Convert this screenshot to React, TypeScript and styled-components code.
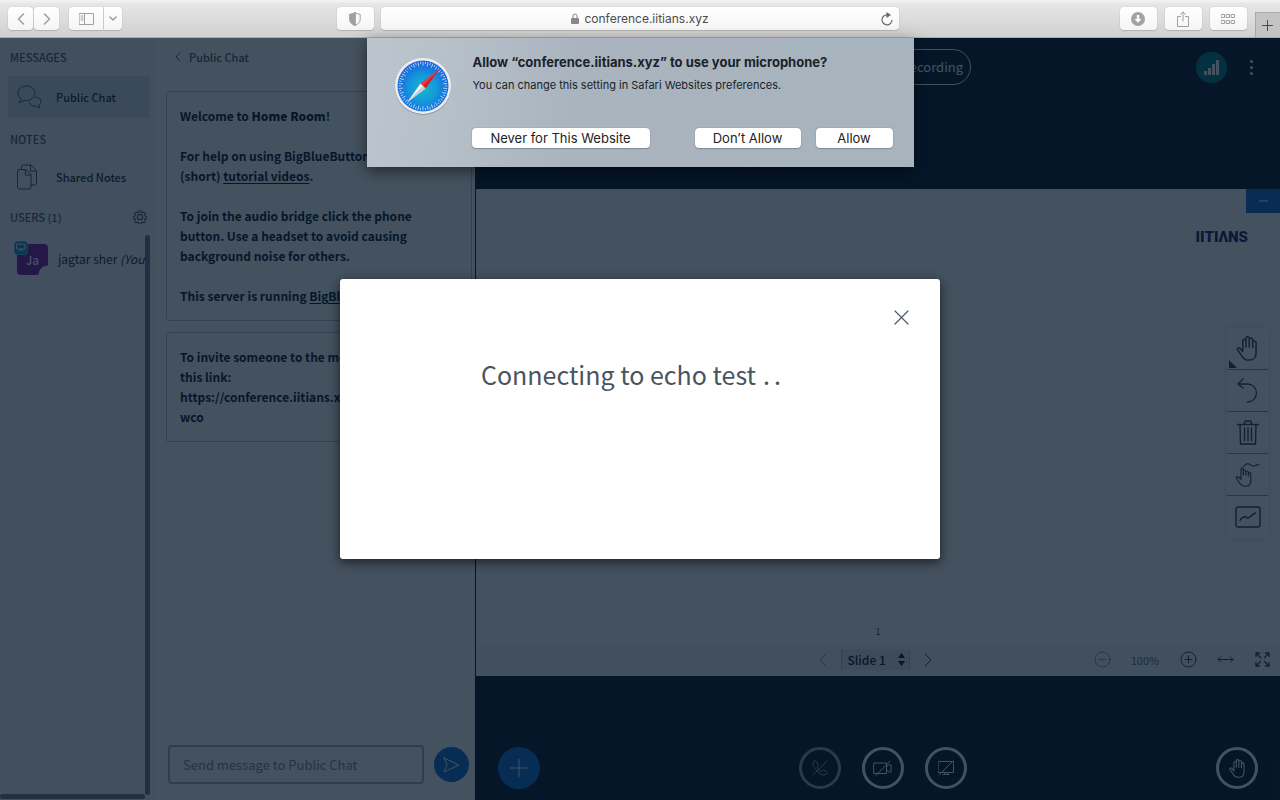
import React from "react";
import styled, { createGlobalStyle } from "styled-components";

const humanist = `"Noto Sans CJK SC", "Noto Sans", sans-serif`;
const system = `Inter, "Liberation Sans", sans-serif`;

const GlobalStyle = createGlobalStyle`
  *, *::before, *::after { box-sizing: border-box; }
  body { margin: 0; font-family: ${humanist}; color: #06172a; }
  button, input, select { font: inherit; color: inherit; margin: 0; padding: 0; border: 0; background: none; }
  button { display: flex; align-items: center; justify-content: center; cursor: pointer; }
  h1, h2, p { margin: 0; }
  a { color: inherit; text-underline-offset: 2px; }
  svg { display: block; flex: none; }
`;

const Window = styled.div`
  display: flex;
  flex-direction: column;
  min-height: 100vh;
  overflow: hidden;
`;

/* Browser toolbar */
const Toolbar = styled.header`
  display: grid;
  grid-template-columns: 22fr 30fr 22fr;
  height: 38px;
  flex: none;
  background: linear-gradient(#f4f4f4 0, #e6e6e6 4px, #d0d0d0 100%);
  border-bottom: 1px solid #a9adb0;
  font-family: ${system};
`;
const ToolbarSide = styled.div<{ $end?: boolean }>`
  display: flex;
  align-items: center;
  justify-content: ${(p) => (p.$end ? "flex-end" : "flex-start")};
  padding: ${(p) => (p.$end ? "0" : "0 7px 0 8px")};
  gap: ${(p) => (p.$end ? "8px" : "1px")};
`;
const ToolButton = styled.button<{ $w: number; $join?: "left" | "right" }>`
  width: ${(p) => p.$w}px;
  height: 23px;
  background: linear-gradient(#fff, #f5f5f5);
  border-radius: ${(p) => (p.$join === "left" ? "4px 0 0 4px" : p.$join === "right" ? "0 4px 4px 0" : "4px")};
  box-shadow: 0 0 1px #a0a0a0, 0 1px 1px #b4b4b4;
  color: #a0a0a0;
`;
const SplitPair = styled.div`
  display: flex;
  gap: 1px;
  margin-left: 9px;
`;
const Push = styled.div`
  margin-left: auto;
`;
const Address = styled.div`
  align-self: center;
  display: grid;
  grid-template-columns: 1fr auto 1fr;
  align-items: center;
  height: 23px;
  padding: 0 6px;
  background: linear-gradient(#fff, #f6f6f6);
  border-radius: 4px;
  box-shadow: 0 0 1px #a0a0a0, 0 1px 1px #b4b4b4;
  font-size: 12px;
  line-height: 16px;
  color: #4c4c4c;
`;
const AddressText = styled.span`
  grid-column: 2;
  display: flex;
  align-items: center;
  gap: 5px;
`;
const Reload = styled.button`
  justify-self: end;
  color: #6b6b6b;
`;
const NewTab = styled.button`
  align-self: flex-end;
  width: 25px;
  height: 25px;
  background: #c3c3c3;
  border-left: 1px solid #a8a8a8;
  border-top: 1px solid #a8a8a8;
  color: #4a4a4a;
`;

/* Conference page */
const Stage = styled.div`
  position: relative;
  flex: 1;
  display: flex;
`;
const Sidebar = styled.aside`
  position: relative;
  flex: none;
  width: 156px;
  padding: 9px 6px 0 8px;
  background: #f3f6f9;
  overflow: hidden;
`;
const SideHeading = styled.h2`
  display: flex;
  align-items: center;
  justify-content: space-between;
  height: 20px;
  padding: 0 3px 0 2px;
  font-size: 11px;
  line-height: 20px;
  font-weight: 500;
  color: #4e5a66;
`;
const SideItem = styled.button<{ $active?: boolean }>`
  width: 100%;
  height: ${(p) => (p.$active ? 42 : 38)}px;
  margin: 9px 0 11px;
  padding-left: 8px;
  gap: 14px;
  justify-content: flex-start;
  border-radius: 3px;
  background: ${(p) => (p.$active ? "#dce4ec" : "transparent")};
  font-size: 11px;
  line-height: 20px;
  font-weight: 500;
  color: #1c2a38;
`;
const IconSlot = styled.span`
  flex: none;
  width: 26px;
  color: #4e5a66;
`;
const User = styled.div`
  display: flex;
  align-items: center;
  gap: 10px;
  height: 32px;
  margin-top: 16px;
  padding-left: 9px;
  font-size: 12px;
  line-height: 20px;
  white-space: nowrap;
  color: #1c2a38;
`;
const Avatar = styled.div`
  position: relative;
  flex: none;
  width: 31px;
  height: 31px;
  border-radius: 4px;
  background: radial-gradient(circle at 100% 100%, #f3f6f9 9px, #7b1fa2 10px);
  color: #fff;
  font-size: 12px;
  line-height: 31px;
  font-weight: 500;
  text-align: center;
`;
const Presenter = styled.span`
  position: absolute;
  left: -2px;
  top: -2px;
  display: flex;
  align-items: center;
  justify-content: center;
  width: 12px;
  height: 12px;
  border-radius: 3px;
  background: #0f9ad7;
  box-shadow: 0 0 0 1px #5fb8e4;
`;
const ScrollV = styled.div`
  position: absolute;
  top: 197px;
  bottom: 5px;
  left: 145px;
  width: 5px;
  border-radius: 3px;
  background: #6f7b86;
`;
const ScrollH = styled.div`
  position: absolute;
  left: 0;
  bottom: 1px;
  width: 145px;
  height: 5px;
  border-radius: 3px;
  background: #6f7b86;
`;

const Chat = styled.section`
  flex: none;
  display: flex;
  flex-direction: column;
  width: 320px;
  padding: 9px 3px 16px 10px;
  background: #fff;
  border-right: 1px solid #06172a;
`;
const ChatTitle = styled.button`
  align-self: flex-start;
  height: 20px;
  margin: 0 0 24px 9px;
  gap: 8px;
  font-size: 11px;
  line-height: 20px;
  font-weight: 500;
  color: #4e5a66;
`;
const Notice = styled.div`
  margin-bottom: 11px;
  padding: 14px 0 14px 13px;
  border: 1px solid #b8c2cc;
  border-radius: 3px;
  overflow: hidden;
  white-space: nowrap;
  font-size: 12px;
  line-height: 20px;
  font-weight: 700;
`;
const Strong = styled.b`
  font-weight: 900;
`;
const Paragraph = styled.p`
  & + & { margin-top: 20px; }
`;
const Composer = styled.form`
  display: flex;
  align-items: center;
  gap: 10px;
  margin-top: auto;
  padding: 0 3px 0 2px;
`;
const MessageInput = styled.input`
  flex: 1;
  min-width: 0;
  height: 39px;
  padding: 0 13px;
  border: 2px solid #a7b3bd;
  border-radius: 4px;
  font-size: 13px;
  &::placeholder { color: #7b8894; opacity: 1; }
`;
const Send = styled.button`
  width: 35px;
  height: 35px;
  border-radius: 50%;
  background: #0f70d7;
  color: #fff;
`;

const Media = styled.main`
  flex: 1;
  min-width: 0;
  display: flex;
  flex-direction: column;
  background: #06172a;
  color: #fff;
`;
const NavBar = styled.div`
  display: grid;
  grid-template-columns: 1fr auto 1fr;
  align-items: start;
  height: 151px;
  padding: 11px 20px 0;
`;
const RecordPill = styled.button`
  grid-column: 2;
  width: 186px;
  height: 36px;
  padding-right: 7px;
  justify-content: flex-end;
  border: 1px solid #fff;
  border-radius: 18px;
  font-size: 13px;
  line-height: 20px;
`;
const NavEnd = styled.div`
  display: flex;
  align-items: center;
  justify-content: flex-end;
  gap: 16px;
  height: 36px;
`;
const Signal = styled.button`
  width: 31px;
  height: 31px;
  border-radius: 50%;
  background: #008081;
`;
const Dots = styled.button`
  width: 17px;
`;

const Presentation = styled.section`
  flex: 1;
  display: flex;
  flex-direction: column;
  background: #fff;
  color: #06172a;
`;
const Slide = styled.div`
  flex: 1;
  display: flex;
  flex-direction: column;
  align-items: flex-end;
`;
const Minimize = styled.button`
  width: 34px;
  height: 24px;
  background: #0f70d7;
  color: #fff;
`;
const Brand = styled.div`
  margin: 14px 32px 0 0;
  font-family: Roboto, sans-serif;
  font-size: 15px;
  line-height: 20px;
  font-weight: 900;
  color: #14206c;
`;
const Palette = styled.div`
  display: flex;
  flex-direction: column;
  width: 41px;
  margin: 81px 12px 0 0;
  border-radius: 4px;
  box-shadow: 0 0 8px #dfe4e8;
  color: #33404d;
`;
const Tool = styled.button`
  position: relative;
  height: 42px;
  border-bottom: 1px solid #8d99a5;
  &:last-child { border-bottom: 0; }
`;
const Corner = styled.svg`
  position: absolute;
  left: 2px;
  bottom: 1px;
`;
const SlideNumber = styled.div`
  align-self: center;
  margin-top: auto;
  font-size: 9px;
  line-height: 22px;
  color: #33404d;
`;
const SlideBar = styled.div`
  display: grid;
  grid-template-columns: 1fr auto 1fr;
  align-items: center;
  height: 33px;
  padding-right: 6px;
  background: #f3f6f9;
`;
const Pager = styled.div`
  grid-column: 2;
  display: flex;
  align-items: center;
  gap: 14px;
`;
const SelectWrap = styled.label`
  position: relative;
  display: flex;
  align-items: center;
`;
const SlideSelect = styled.select`
  appearance: none;
  width: 69px;
  height: 21px;
  padding-left: 6px;
  background: #e2e8ee;
  border-left: 1px solid #b8c2cc;
  border-right: 1px solid #b8c2cc;
  font-size: 12px;
  line-height: 20px;
  font-weight: 500;
`;
const Arrows = styled.svg`
  position: absolute;
  right: 5px;
  pointer-events: none;
`;
const Zoom = styled.div`
  display: flex;
  align-items: center;
  justify-content: flex-end;
  font-size: 11px;
  line-height: 20px;
  color: #65717d;
`;
const BarButton = styled.button<{ $w: number; $dim?: boolean }>`
  width: ${(p) => p.$w}px;
  height: 24px;
  color: ${(p) => (p.$dim ? "#8b97a3" : "#33404d")};
`;
const ZoomValue = styled.span`
  width: 62px;
  text-align: center;
`;

const Actions = styled.footer`
  display: grid;
  grid-template-columns: 1fr auto 1fr;
  align-items: end;
  height: 124px;
  padding: 0 22px 11px;
`;
const ActionGroup = styled.div`
  grid-column: 2;
  display: flex;
  gap: 21px;
  padding-left: 10px;
`;
const Round = styled.button<{ $solid?: boolean; $dim?: boolean; $end?: boolean }>`
  width: 42px;
  height: 42px;
  justify-self: ${(p) => (p.$end ? "end" : "start")};
  border-radius: 50%;
  border: ${(p) => (p.$solid ? "0" : "3px solid #fff")};
  background: ${(p) => (p.$solid ? "#0f70d7" : "transparent")};
  opacity: ${(p) => (p.$dim ? 0.6 : 1)};
`;

/* Layers over the page */
const Backdrop = styled.div`
  position: absolute;
  inset: 0;
  display: flex;
  align-items: center;
  justify-content: center;
  background: rgba(6, 23, 42, 0.75);
`;
const Modal = styled.div`
  width: 600px;
  max-width: 100%;
  height: 280px;
  padding: 24px;
  background: #fff;
  border-radius: 3px;
  box-shadow: 0 3px 12px rgba(0, 0, 0, 0.6);
`;
const Close = styled.button`
  width: 29px;
  height: 29px;
  margin-left: auto;
  color: #4e5a66;
`;
const ModalText = styled.h1`
  display: flex;
  margin-top: 22px;
  padding-left: 117px;
  font-size: 25px;
  line-height: 40px;
  font-weight: 400;
  color: #4a545f;
`;
const Ellipsis = styled.span`
  display: flex;
  gap: 4px;
  margin-left: 7px;
`;
const SheetLayer = styled.div`
  position: absolute;
  top: 0;
  left: 0;
  right: 0;
  display: flex;
  justify-content: center;
`;
const Sheet = styled.div`
  display: flex;
  gap: 20px;
  width: 547px;
  height: 129px;
  padding: 14px 21px 19px 27px;
  background: linear-gradient(100deg, #bcc5cd 0, #b6c0c9 15%, #a9b4be 38%, #a7b3bd 100%);
  box-shadow: 0 4px 14px rgba(0, 0, 0, 0.5);
  font-family: ${system};
  color: #1b2228;
`;
const SheetIcon = styled.div`
  padding-top: 5px;
`;
const SheetBody = styled.div`
  flex: 1;
  display: flex;
  flex-direction: column;
`;
const SheetTitle = styled.h2`
  padding-left: 1px;
  font-size: 13px;
  line-height: 20px;
  font-weight: 700;
`;
const SheetNote = styled.p`
  padding: 4px 0 0 1px;
  font-size: 11px;
  line-height: 18px;
`;
const SheetButtons = styled.div`
  display: flex;
  gap: 15px;
  margin-top: auto;
`;
const SheetButton = styled.button<{ $w: number; $first?: boolean }>`
  width: ${(p) => p.$w}px;
  height: 20px;
  margin-right: ${(p) => (p.$first ? "auto" : "0")};
  background: #fff;
  border-radius: 4px;
  box-shadow: 0 0 1px #5c6670, 0 1px 1px #86919b;
  font-size: 13px;
  line-height: 20px;
  color: #222;
`;

type LineProps = { w: number; h?: number; box?: string; sw?: number; children: React.ReactNode };
const Line = ({ w, h = w, box, sw = 1, children }: LineProps) => (
  <svg
    width={w}
    height={h}
    viewBox={box ?? `0 0 ${w} ${h}`}
    fill="none"
    stroke="currentColor"
    strokeWidth={sw}
    strokeLinecap="round"
    strokeLinejoin="round"
    aria-hidden="true"
  >
    {children}
  </svg>
);

const Hand = ({ size, sw }: { size: number; sw: number }) => (
  <Line w={size} box="0 0 24 24" sw={sw}>
    <path d="M7.500 14V4.600a1.500 1.500 0 0 1 3 0V10.500M10.500 4V2.400a1.500 1.500 0 0 1 3.200 0V10.500M13.700 3.500a1.600 1.600 0 0 1 3.300 0V11M17 6.500a1.500 1.500 0 0 1 3.200 0V16.500c0 3.800-2.400 6.500-5.800 6.500h-2.300c-2.300 0-3.700-1-4.900-2.900L2.400 13.200c-.6-1.400 1.200-2.600 2.400-1.400L7.500 15" />
  </Line>
);

const SafariIcon = () => (
  <svg width="58" height="58" viewBox="0 0 58 58" aria-hidden="true">
    <defs>
      <radialGradient id="dial" cx="50%" cy="55%" r="52%">
        <stop offset="0" stopColor="#16b9c6" />
        <stop offset=".5" stopColor="#1499dc" />
        <stop offset="1" stopColor="#1b62dc" />
      </radialGradient>
    </defs>
    <circle cx="29" cy="30" r="28" fill="#8d969e" />
    <circle cx="29" cy="29" r="28" fill="#eceef0" />
    <circle cx="29" cy="29" r="25.500" fill="url(#dial)" />
    {Array.from({ length: 60 }, (_, i) => (
      <path
        key={i}
        d={i % 2 ? "M29 4.600v2.400" : "M29 4.600v4.200"}
        stroke="#dff1fb"
        strokeWidth=".7"
        transform={`rotate(${i * 6} 29 29)`}
      />
    ))}
    <path d="M45 12.500L26.500 26.500l5 5z" fill="#f5333f" />
    <path d="M45 12.500L29 29l2.500 2.500z" fill="#c9202f" />
    <path d="M13 45.500L26.500 26.500l5 5z" fill="#f4f4f4" />
    <path d="M13 45.500L29 29l2.500 2.500z" fill="#c4ccd2" />
  </svg>
);

const BrowserBar = () => (
  <Toolbar>
    <ToolbarSide>
      <ToolButton $w={25} aria-label="Back">
        <Line w={8} h={12} sw={1.6}><path d="M6.500 1L1.500 6l5 5" /></Line>
      </ToolButton>
      <ToolButton $w={25} aria-label="Forward">
        <Line w={8} h={12} sw={1.6}><path d="M1.500 1l5 5-5 5" /></Line>
      </ToolButton>
      <SplitPair>
        <ToolButton $w={34} $join="left" aria-label="Sidebar">
          <Line w={15} h={12}><path d="M.5.5h14v11H.5zM5.500.5v11M2 3h2M2 5h2M2 7h2" /></Line>
        </ToolButton>
        <ToolButton $w={18} $join="right" aria-label="Sidebar options">
          <Line w={8} h={5} sw={1.6}><path d="M1 1l3 3 3-3" /></Line>
        </ToolButton>
      </SplitPair>
      <Push>
        <ToolButton $w={37} aria-label="Privacy report">
          <Line w={12} h={14}>
            <path d="M6 .7C4.500 1.800 2.500 2.200.8 2.300v5c0 3 2 4.800 5.200 6.200 3.200-1.400 5.200-3.200 5.200-6.200v-5C9.500 2.200 7.500 1.800 6 .7z" />
            <path d="M6 .7C4.500 1.800 2.500 2.200.8 2.300v5c0 3 2 4.800 5.200 6.200z" fill="currentColor" />
          </Line>
        </ToolButton>
      </Push>
    </ToolbarSide>
    <Address>
      <AddressText>
        <svg width="8" height="11" viewBox="0 0 8 11" aria-hidden="true">
          <path d="M2 5V3a2 2 0 0 1 4 0v2" fill="none" stroke="#888" />
          <rect y="5" width="8" height="6" rx="1" fill="#888" />
        </svg>
        conference.iitians.xyz
      </AddressText>
      <Reload aria-label="Reload">
        <svg width="12" height="14" viewBox="0 0 12 14" aria-hidden="true">
          <path d="M6 2.800A5 5 0 1 0 11 8" fill="none" stroke="currentColor" strokeWidth="1.200" />
          <path d="M5.500 0l4.500 3-4.500 3z" fill="currentColor" />
        </svg>
      </Reload>
    </Address>
    <ToolbarSide $end>
      <ToolButton $w={37} aria-label="Downloads">
        <svg width="14" height="14" viewBox="0 0 14 14" aria-hidden="true">
          <circle cx="7" cy="7" r="7" fill="#a3a3a3" />
          <path d="M5.800 3h2.400v4h2.300L7 10.800 3.500 7h2.300z" fill="#fff" />
        </svg>
      </ToolButton>
      <ToolButton $w={37} aria-label="Share">
        <Line w={12} h={16}><path d="M3.500 5.500h-3v10h11v-10h-3M6 10V1M3.500 3.500L6 1l2.500 2.500" /></Line>
      </ToolButton>
      <ToolButton $w={37} aria-label="Tab overview">
        <Line w={14} h={10}>
          <path d="M.5.5h3v3h-3zM5.500.5h3v3h-3zM10.500.5h3v3h-3zM.5 6.500h3v3h-3zM5.500 6.500h3v3h-3zM10.500 6.500h3v3h-3z" />
        </Line>
      </ToolButton>
      <NewTab aria-label="New tab">
        <Line w={11}><path d="M5.500.5v10M.5 5.500h10" /></Line>
      </NewTab>
    </ToolbarSide>
  </Toolbar>
);

const UserList = () => (
  <Sidebar>
    <SideHeading>MESSAGES</SideHeading>
    <SideItem $active>
      <IconSlot>
        <Line w={26} h={26}>
          <path d="M10.500 2C5.500 2 2 5 2 9c0 2.300 1.100 4.200 3 5.500.1 1.500-.7 2.800-2 3.900 2 0 3.800-.8 5-2.200.8.200 1.600.3 2.500.3C15.500 16.500 19 13.200 19 9.200S15.500 2 10.500 2z" />
          <path d="M20 13c3 .6 5 2.300 5 4.600 0 1.500-.8 2.600-2 3.400 0 1 .4 2 1 2.700-1.500-.1-2.700-.7-3.500-1.600-3.600.4-6.500-1-7-3.600" />
        </Line>
      </IconSlot>
      Public Chat
    </SideItem>
    <SideHeading>NOTES</SideHeading>
    <SideItem>
      <IconSlot>
        <Line w={22} h={26}>
          <path d="M2.500 5.500H10l5 5V23a2 2 0 0 1-2 2H3.500a2 2 0 0 1-2-2V7a1.500 1.500 0 0 1 1-1.500zM9.500 6v5h5M5.500 5V3a2 2 0 0 1 2-2H15l5.500 5.500V19a2 2 0 0 1-2 2H15M14.500 1.500V7H20" />
        </Line>
      </IconSlot>
      Shared Notes
    </SideItem>
    <SideHeading>
      USERS (1)
      <Line w={14} box="0 0 24 24" sw={2}>
        <circle cx="12" cy="12" r="4.500" />
        <path d="M10 1.500h4l.7 3 2 .9 2.800-1.500 2.700 2.800-1.500 2.700.8 2 3 .8v3.600l-3 .7-.8 2 1.500 2.800-2.700 2.700-2.800-1.500-2 .8-.7 3h-4l-.7-3-2-.8-2.800 1.500-2.700-2.700 1.500-2.800-.8-2-3-.7v-3.600l3-.8.8-2-1.500-2.700 2.700-2.800 2.800 1.500 2-.9z" transform="translate(1 -.2) scale(.92)" />
      </Line>
    </SideHeading>
    <User>
      <Avatar>
        <Presenter>
          <Line w={10} h={9}><path d="M1 1h8v5H1zM3 8l2-2 2 2" /></Line>
        </Presenter>
        Ja
      </Avatar>
      <span>jagtar sher <em>(You)</em></span>
    </User>
    <ScrollV />
    <ScrollH />
  </Sidebar>
);

const PublicChat = () => (
  <Chat>
    <ChatTitle>
      <Line w={6} h={10}><path d="M5 1L1 5l4 4" /></Line>
      Public Chat
    </ChatTitle>
    <Notice>
      <Paragraph>Welcome to <Strong>Home Room</Strong>!</Paragraph>
      <Paragraph>
        For help on using BigBlueButton see these<br />
        (short) <a href="#tutorials">tutorial videos</a>.
      </Paragraph>
      <Paragraph>
        To join the audio bridge click the phone<br />
        button. Use a headset to avoid causing<br />
        background noise for others.
      </Paragraph>
      <Paragraph>This server is running <a href="#bbb">BigBlueButton</a>.</Paragraph>
    </Notice>
    <Notice>
      <Paragraph>
        To invite someone to the meeting, send<br />
        this link:<br />
        https://conference.iitians.xyz/b/<br />
        wco
      </Paragraph>
    </Notice>
    <Composer onSubmit={(e) => e.preventDefault()}>
      <MessageInput aria-label="Message" placeholder="Send message to Public Chat" />
      <Send aria-label="Send message">
        <Line w={17} h={16}><path d="M1 1l15 7-15 7 3-7z" /></Line>
      </Send>
    </Composer>
  </Chat>
);

const Tools = () => (
  <Palette>
    <Tool aria-label="Pan">
      <Hand size={25} sw={1.4} />
      <Corner width="8" height="8" aria-hidden="true"><path d="M0 0l8 8H0z" fill="currentColor" /></Corner>
    </Tool>
    <Tool aria-label="Undo">
      <Line w={21} h={25} sw={1.3}><path d="M6 1L1 6l5 4M1 6h9.500a9 9 0 0 1 0 18" /></Line>
    </Tool>
    <Tool aria-label="Clear all">
      <Line w={22} h={25} sw={1.4}>
        <path d="M.5 4.500h21M7.500 4.500V3a2 2 0 0 1 2-2h3a2 2 0 0 1 2 2v1.500M3 4.500L3.500 24h15L19 4.500M7.500 8v12.500M11 8v12.500M14.500 8v12.500" />
      </Line>
    </Tool>
    <Tool aria-label="Multi-user whiteboard">
      <Line w={25} h={25} sw={1.2}>
        <path d="M6 17V7.500a1.200 1.200 0 0 1 2.400 0V13M8.400 12V9.500a1.200 1.200 0 0 1 2.500 0V13M10.900 12v-1.500a1.200 1.200 0 0 1 2.500 0V14M13.400 13v-1.200a1.200 1.200 0 0 1 2.400 0V19c0 2.700-1.700 5-4 5H9c-2 0-3-1-4-2.500L1.500 16.500c-.6-1.200.8-2.300 1.900-1.500L6 17.200M8 5c2-2.500 4-4 6-3s2.500 2 4.500 2 3-1.300 5.500-1.500" />
      </Line>
    </Tool>
    <Tool aria-label="Status">
      <Line w={26} h={22} sw={1.4}>
        <rect x="1" y="1" width="24" height="20" rx="2" />
        <path d="M5 14.500c1.500-2.500 3.500-4 5-3.800s2 1.700 3.500 1.300S17 8.500 20.500 7" />
      </Line>
    </Tool>
  </Palette>
);

const Conference = () => (
  <Media>
    <NavBar>
      <RecordPill>Start recording</RecordPill>
      <NavEnd>
        <Signal aria-label="Connection status">
          <svg width="15" height="15" viewBox="0 0 15 15" fill="#fff" aria-hidden="true">
            <path d="M0 11h3v4H0zM4 8h3v7H4zM8 4h3v11H8zM12 0h3v15h-3z" />
          </svg>
        </Signal>
        <Dots aria-label="Options">
          <svg width="3" height="15" viewBox="0 0 3 15" fill="#fff" aria-hidden="true">
            <circle cx="1.500" cy="1.500" r="1.500" /><circle cx="1.500" cy="7.500" r="1.500" /><circle cx="1.500" cy="13.500" r="1.500" />
          </svg>
        </Dots>
      </NavEnd>
    </NavBar>
    <Presentation>
      <Slide>
        <Minimize aria-label="Minimize presentation">
          <Line w={9} h={2}><path d="M0 1h9" /></Line>
        </Minimize>
        <Brand>IITIΛNS</Brand>
        <Tools />
        <SlideNumber>1</SlideNumber>
      </Slide>
      <SlideBar>
        <Pager>
          <BarButton $w={8} $dim aria-label="Previous slide">
            <Line w={8} h={14}><path d="M7 1L1 7l6 6" /></Line>
          </BarButton>
          <SelectWrap>
            <SlideSelect aria-label="Slide"><option>Slide 1</option></SlideSelect>
            <Arrows width="7" height="13" aria-hidden="true"><path d="M3.500 0L7 5H0zM0 8h7l-3.500 5z" fill="#06172a" /></Arrows>
          </SelectWrap>
          <BarButton $w={8} aria-label="Next slide">
            <Line w={8} h={14}><path d="M1 1l6 6-6 6" /></Line>
          </BarButton>
        </Pager>
        <Zoom>
          <BarButton $w={24} $dim aria-label="Zoom out">
            <Line w={17}><circle cx="8.500" cy="8.500" r="7.500" /><path d="M5 8.500h7" /></Line>
          </BarButton>
          <ZoomValue>100%</ZoomValue>
          <BarButton $w={24} aria-label="Zoom in">
            <Line w={17}><circle cx="8.500" cy="8.500" r="7.500" /><path d="M5 8.500h7M8.500 5v7" /></Line>
          </BarButton>
          <BarButton $w={50} aria-label="Fit to width">
            <Line w={17} h={7}><path d="M1 3.500h15M3.500 1L1 3.500 3.500 6M13.500 1L16 3.500 13.500 6" /></Line>
          </BarButton>
          <BarButton $w={24} aria-label="Fullscreen">
            <Line w={15} sw={1.3}>
              <path d="M1 4.500V1h3.500M1 1l4.500 4.500M10.500 1H14v3.500M14 1L9.500 5.500M1 10.500V14h3.500M1 14l4.500-4.500M14 10.500V14h-3.500M14 14L9.500 9.500" />
            </Line>
          </BarButton>
        </Zoom>
      </SlideBar>
    </Presentation>
    <Actions>
      <Round $solid aria-label="Actions">
        <Line w={18}><path d="M9 .5v17M.5 9h17" /></Line>
      </Round>
      <ActionGroup>
        <Round $dim aria-label="Join audio">
          <Line w={16}>
            <path d="M2 1.500C.3 3 .8 5.500 3 8.500s5 5.500 7.500 6.300c2 .5 3.500-.3 4.300-1.800.2-.6 0-1-.5-1.400l-2.300-1.400c-.6-.3-1.100-.2-1.500.3l-.8 1C7.500 10.500 6 8.800 5 6.800l1-.9c.4-.4.5-.9.2-1.500L4.600 1.700C4 1 3 .8 2 1.500zM1 15L15 1" />
          </Line>
        </Round>
        <Round aria-label="Share webcam">
          <Line w={20} h={16}>
            <path d="M1 3h12.500v10.500H1zM13.500 7l2-2H18v7h-2.500l-2-2M3 15.500L17 1" />
          </Line>
        </Round>
        <Round aria-label="Share screen">
          <Line w={16} h={16}>
            <path d="M.5 1.500h15v11H.5zM5 14.500h6M6.500 12.500v2M9.500 12.500v2M1 15L15 1" />
          </Line>
        </Round>
      </ActionGroup>
      <Round $end aria-label="Raise hand"><Hand size={19} sw={1.4} /></Round>
    </Actions>
  </Media>
);

export default function App() {
  return (
    <Window>
      <GlobalStyle />
      <BrowserBar />
      <Stage>
        <UserList />
        <PublicChat />
        <Conference />
        <Backdrop>
          <Modal role="dialog" aria-label="Echo test">
            <Close aria-label="Close">
              <Line w={15} sw={1.2}><path d="M1 1l13 13M14 1L1 14" /></Line>
            </Close>
            <ModalText>
              Connecting to echo test
              <Ellipsis><span>.</span><span>.</span></Ellipsis>
            </ModalText>
          </Modal>
        </Backdrop>
        <SheetLayer>
          <Sheet role="alertdialog" aria-label="Microphone permission">
            <SheetIcon><SafariIcon /></SheetIcon>
            <SheetBody>
              <SheetTitle>Allow “conference.iitians.xyz” to use your microphone?</SheetTitle>
              <SheetNote>You can change this setting in Safari Websites preferences.</SheetNote>
              <SheetButtons>
                <SheetButton $w={178} $first>Never for This Website</SheetButton>
                <SheetButton $w={106}>Don’t Allow</SheetButton>
                <SheetButton $w={77}>Allow</SheetButton>
              </SheetButtons>
            </SheetBody>
          </Sheet>
        </SheetLayer>
      </Stage>
    </Window>
  );
}
